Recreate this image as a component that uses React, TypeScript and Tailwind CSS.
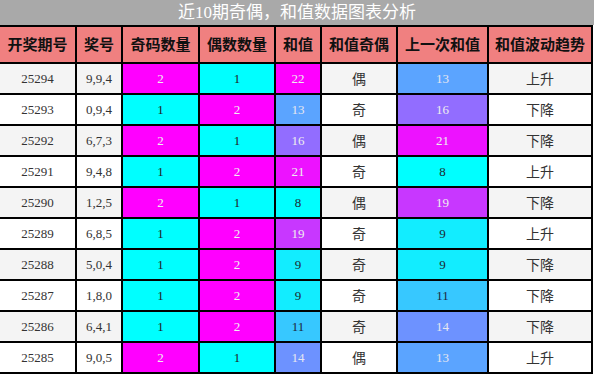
import React from 'react'

type Row = {
    issue: string
    nums: string
    odd: number
    even: number
    sum: number
    parity: string
    prev: number
    trend: string
}

const rows: Row[] = [
    { issue: '25294', nums: '9,9,4', odd: 2, even: 1, sum: 22, parity: '偶', prev: 13, trend: '上升' },
    { issue: '25293', nums: '0,9,4', odd: 1, even: 2, sum: 13, parity: '奇', prev: 16, trend: '下降' },
    { issue: '25292', nums: '6,7,3', odd: 2, even: 1, sum: 16, parity: '偶', prev: 21, trend: '下降' },
    { issue: '25291', nums: '9,4,8', odd: 1, even: 2, sum: 21, parity: '奇', prev: 8, trend: '上升' },
    { issue: '25290', nums: '1,2,5', odd: 2, even: 1, sum: 8, parity: '偶', prev: 19, trend: '下降' },
    { issue: '25289', nums: '6,8,5', odd: 1, even: 2, sum: 19, parity: '奇', prev: 9, trend: '上升' },
    { issue: '25288', nums: '5,0,4', odd: 1, even: 2, sum: 9, parity: '奇', prev: 9, trend: '下降' },
    { issue: '25287', nums: '1,8,0', odd: 1, even: 2, sum: 9, parity: '奇', prev: 11, trend: '下降' },
    { issue: '25286', nums: '6,4,1', odd: 1, even: 2, sum: 11, parity: '奇', prev: 14, trend: '下降' },
    { issue: '25285', nums: '9,0,5', odd: 2, even: 1, sum: 14, parity: '偶', prev: 13, trend: '上升' },
]

const headers = ['开奖期号', '奖号', '奇码数量', '偶数数量', '和值', '和值奇偶', '上一次和值', '和值波动趋势']

// sum value -> cyan..magenta scale
const sumColor: Record<number, string> = {
    8: 'bg-[#00ffff] text-[#1e2a30]',
    9: 'bg-[#12edff] text-[#1e2a30]',
    11: 'bg-[#37c8ff] text-[#1e2a40]',
    13: 'bg-[#5ba4ff] text-[#e6e6f0]',
    14: 'bg-[#6d92ff] text-[#e6e6f0]',
    16: 'bg-[#926dff] text-[#eeeeee]',
    19: 'bg-[#c837ff] text-[#eeeeee]',
    21: 'bg-[#ed12ff] text-[#eeeeee]',
    22: 'bg-[#ff00ff] text-[#eeeeee]',
}

const countColor = (n: number) =>
    n === 2 ? 'bg-[#ff00ff] text-[#f0f0f0]' : 'bg-[#00ffff] text-[#222222]'

const num = "font-['Liberation_Serif',serif] text-[13px]"
const cjk = "font-['Noto_Sans_CJK_SC',sans-serif] text-[14px] text-[#333333]"

export default function App() {
    return (
        <div className="w-[594px] h-[375px] bg-white overflow-hidden">
            <div className="h-[25px] bg-[#a9a9a9] flex items-center justify-center text-white text-[17px] font-['Liberation_Serif','Noto_Sans_CJK_SC',serif] leading-none">
                近10期奇偶，和值数据图表分析
            </div>
            <div className="w-[593px] bg-black pt-[2px] pr-[2px] pb-[2px] grid grid-cols-[75px_44px_75px_74px_44px_74px_89px_102px] auto-rows-[29px] gap-[2px] [grid-template-rows:35px]">
                {headers.map(h => (
                    <div key={h} className="bg-[#f08080] flex items-center justify-center font-['Noto_Sans_CJK_SC',sans-serif] font-bold text-[15px] text-[#111111]">
                        {h}
                    </div>
                ))}
                {rows.map((r, i) => {
                    const bg = i % 2 === 0 ? 'bg-[#f4f4f4]' : 'bg-white'
                    const cell = 'flex items-center justify-center'
                    return (
                        <React.Fragment key={r.issue}>
                            <div className={`${cell} ${bg} ${num} text-[#333333]`}>{r.issue}</div>
                            <div className={`${cell} ${bg} ${num} text-[#333333]`}>{r.nums}</div>
                            <div className={`${cell} ${num} ${countColor(r.odd)}`}>{r.odd}</div>
                            <div className={`${cell} ${num} ${countColor(r.even)}`}>{r.even}</div>
                            <div className={`${cell} ${num} ${sumColor[r.sum]}`}>{r.sum}</div>
                            <div className={`${cell} ${bg} ${cjk}`}>{r.parity}</div>
                            <div className={`${cell} ${num} ${sumColor[r.prev]}`}>{r.prev}</div>
                            <div className={`${cell} ${bg} ${cjk}`}>{r.trend}</div>
                        </React.Fragment>
                    )
                })}
            </div>
        </div>
    )
}
